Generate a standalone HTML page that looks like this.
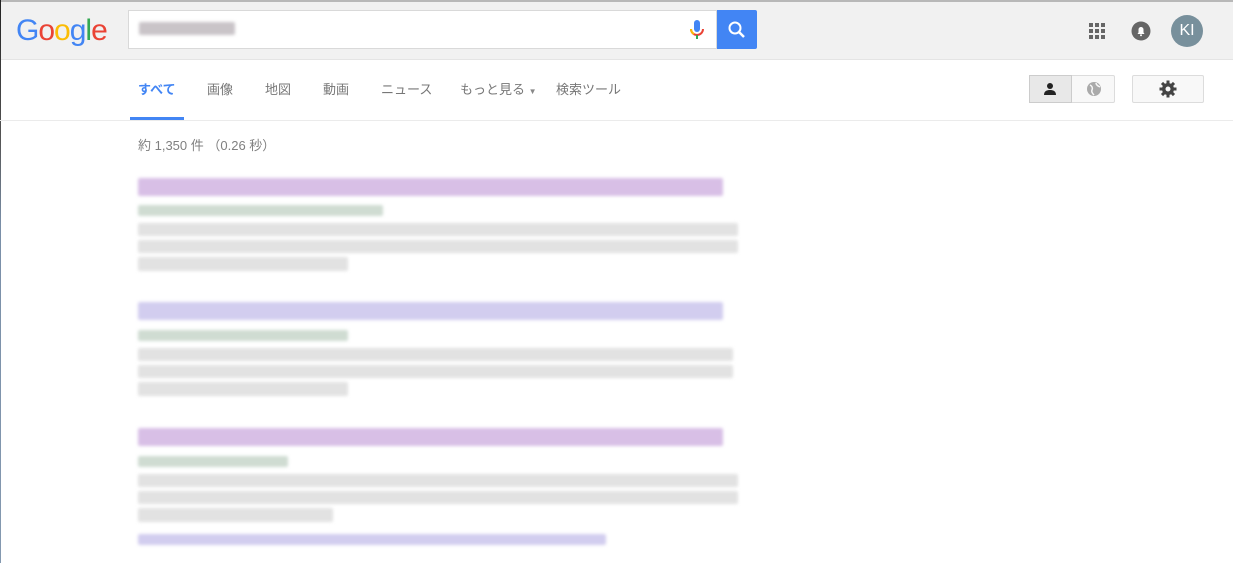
<!DOCTYPE html>
<html><head><meta charset="utf-8"><style>
body{margin:0;width:1233px;height:563px;overflow:hidden;background:#fff;font-family:"Liberation Sans","Noto Sans CJK JP",sans-serif;position:relative}
.a{position:absolute}
.hdr{left:0;top:0;width:1233px;height:60px;background:#f1f1f1;border-top:2px solid #b8b8b8;box-sizing:border-box;border-bottom:1px solid #e4e4e4}
.tab{top:79px;font-size:13px;color:#777}
.b{position:absolute;border-radius:2px;filter:blur(1.5px)}
.t1{background:#d8bfe6}.t2{background:#d2cdef}.u{background:#cfdcd2}.s{background:#e2e2e2}.s2{background:#d6d6d6}
</style></head><body>
<div class="a hdr"></div>
<div class="a" style="left:0;top:0;width:1px;height:563px;background:linear-gradient(#222,#555 25%,#7a8fa8 40%,#8499b0)"></div>
<div class="a" style="left:16px;top:14px;font-size:30px;letter-spacing:-1px;font-weight:normal"><span style="color:#4285f4">G</span><span style="color:#ea4335">o</span><span style="color:#fbbc05">o</span><span style="color:#4285f4">g</span><span style="color:#34a853">l</span><span style="color:#ea4335">e</span></div>
<div class="a" style="left:128px;top:10px;width:589px;height:39px;background:#fff;border:1px solid #d9d9d9;box-sizing:border-box"></div>
<div class="b" style="left:139px;top:22px;width:96px;height:13px;background:#c9c4c8"></div>
<svg class="a" style="left:688px;top:19px" width="18" height="22" viewBox="0 0 18 22"><rect x="6" y="1" width="6" height="12" rx="3" fill="#4285f4"/><path d="M3 10a6 6 0 0 0 12 0" stroke="#ea4335" stroke-width="2" fill="none"/><path d="M3 10a6 6 0 0 0 3 5" stroke="#fbbc05" stroke-width="2" fill="none"/><rect x="8" y="16" width="2" height="4" fill="#34a853"/></svg>
<div class="a" style="left:717px;top:10px;width:40px;height:39px;background:#4285f4;border-radius:0 2px 2px 0"></div>
<svg class="a" style="left:727px;top:20px" width="20" height="20" viewBox="0 0 20 20"><circle cx="8" cy="8" r="5.5" stroke="#fff" stroke-width="2" fill="none"/><path d="M12 12l5 5" stroke="#fff" stroke-width="2.5"/></svg>
<svg class="a" style="left:1089px;top:23px" width="16" height="16"><g fill="#666"><rect x="0" y="0" width="4" height="4"/><rect x="6" y="0" width="4" height="4"/><rect x="12" y="0" width="4" height="4"/><rect x="0" y="6" width="4" height="4"/><rect x="6" y="6" width="4" height="4"/><rect x="12" y="6" width="4" height="4"/><rect x="0" y="12" width="4" height="4"/><rect x="6" y="12" width="4" height="4"/><rect x="12" y="12" width="4" height="4"/></g></svg>
<svg class="a" style="left:1131px;top:21px" width="20" height="20"><circle cx="10" cy="10" r="9.5" fill="#666"/><path d="M6.5 13h7l-1-1.5v-3a2.5 2.5 0 0 0-5 0v3z" fill="#fff"/><circle cx="10" cy="14.2" r="1" fill="#fff"/></svg>
<div class="a" style="left:1171px;top:15px;width:32px;height:32px;border-radius:50%;background:#78909c;color:#fff;font-size:16px;line-height:32px;text-align:center">KI</div>
<div class="a" style="left:0;top:120px;width:1233px;height:1px;background:#ebebeb"></div>
<div class="a tab" style="left:138px;color:#4285f4;font-weight:bold">すべて</div>
<div class="a" style="left:130px;top:117px;width:54px;height:3px;background:#4285f4"></div>
<div class="a tab" style="left:207px">画像</div>
<div class="a tab" style="left:265px">地図</div>
<div class="a tab" style="left:323px">動画</div>
<div class="a tab" style="left:381px">ニュース</div>
<div class="a tab" style="left:460px">もっと見る <span style="font-size:8px;color:#888">▼</span></div>
<div class="a tab" style="left:556px">検索ツール</div>
<div class="a" style="left:1029px;top:75px;width:86px;height:28px;border:1px solid #dcdcdc;box-sizing:border-box;background:#f8f8f8;border-radius:2px"></div>
<div class="a" style="left:1029px;top:75px;width:43px;height:28px;background:#e8e8e8;border:1px solid #ccc;box-sizing:border-box"></div>
<svg class="a" style="left:1044px;top:82px" width="12" height="14"><circle cx="6" cy="4" r="3" fill="#222"/><path d="M0 13c0-4 3-5 6-5s6 1 6 5z" fill="#222"/></svg>
<svg class="a" style="left:1086px;top:81px" width="16" height="16"><circle cx="8" cy="8" r="7" fill="#aaa"/><path d="M4 4c2 1 3 3 2 5s1 4 2 5M10 2c0 2 2 3 4 4" stroke="#f8f8f8" stroke-width="1.5" fill="none"/></svg>
<div class="a" style="left:1132px;top:75px;width:72px;height:28px;border:1px solid #dcdcdc;box-sizing:border-box;background:#f8f8f8;border-radius:2px"></div>
<svg class="a" style="left:1159px;top:80px" width="18" height="18" viewBox="0 0 18 18"><g fill="#444"><circle cx="9" cy="9" r="6"/><rect x="7.5" y="0.5" width="3" height="17"/><rect x="0.5" y="7.5" width="17" height="3"/><rect x="7.5" y="0.5" width="3" height="17" transform="rotate(45 9 9)"/><rect x="7.5" y="0.5" width="3" height="17" transform="rotate(-45 9 9)"/></g><circle cx="9" cy="9" r="2.5" fill="#f8f8f8"/></svg>
<div class="a" style="left:138px;top:135px;font-size:13px;color:#808080">約 1,350 件 （0.26 秒）</div>

<div class="b t1" style="left:138px;top:178px;width:585px;height:18px"></div>
<div class="b u" style="left:138px;top:205px;width:245px;height:11px"></div>
<div class="b s" style="left:138px;top:223px;width:600px;height:13px"></div>
<div class="b s" style="left:138px;top:240px;width:600px;height:13px"></div>
<div class="b s" style="left:138px;top:257px;width:210px;height:14px"></div>

<div class="b t2" style="left:138px;top:302px;width:585px;height:18px"></div>
<div class="b u" style="left:138px;top:330px;width:210px;height:11px"></div>
<div class="b s" style="left:138px;top:348px;width:595px;height:13px"></div>
<div class="b s" style="left:138px;top:365px;width:595px;height:13px"></div>
<div class="b s" style="left:138px;top:382px;width:210px;height:14px"></div>

<div class="b t1" style="left:138px;top:428px;width:585px;height:18px"></div>
<div class="b u" style="left:138px;top:456px;width:150px;height:11px"></div>
<div class="b s" style="left:138px;top:474px;width:600px;height:13px"></div>
<div class="b s" style="left:138px;top:491px;width:600px;height:13px"></div>
<div class="b s" style="left:138px;top:508px;width:195px;height:14px"></div>
<div class="b t2" style="left:138px;top:534px;width:468px;height:11px"></div>
</body></html>
